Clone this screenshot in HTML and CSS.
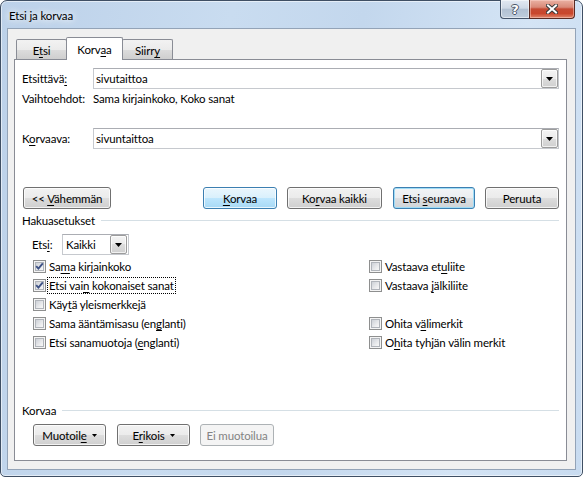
FILE: index.html
```html
<!DOCTYPE html>
<html lang="fi">
<head>
<meta charset="utf-8">
<title>Etsi ja korvaa</title>
<link rel="stylesheet" href="styles.css">
</head>
<body>
<div class="window">
  <div class="titlebar">
    <span class="title">Etsi ja korvaa</span>
    <div class="caption">
      <div class="cap-btn help"><span class="qmark">?</span></div>
      <div class="cap-btn close">
        <svg width="12" height="10" viewBox="0 0 12 10"><path d="M2 1.5L10 8.5M10 1.5L2 8.5" stroke="#3a3a3a" stroke-width="4" stroke-linecap="square"/><path d="M2 1.5L10 8.5M10 1.5L2 8.5" stroke="#fff" stroke-width="2" stroke-linecap="square"/></svg>
      </div>
    </div>
  </div>
  <div class="client">
    <div class="tabctl">
      <div class="tabstrip">
        <div class="tab"><span>E<u>t</u>si</span></div>
        <div class="tab active"><span>Korv<u>a</u>a</span></div>
        <div class="tab"><span>Siirr<u>y</u></span></div>
      </div>
      <div class="panel">
        <div class="row-combo first">
          <span class="lbl">Etsittävä<u>:</u></span>
          <div class="combo">
            <span class="combo-text">sivutaittoa</span>
            <span class="ddbtn"><svg width="7" height="4" viewBox="0 0 7 4"><path d="M0 0H7L3.5 4Z" fill="#000"/></svg></span>
          </div>
        </div>
        <div class="row-text">
          <span class="lbl">Vaihtoehdot:</span>
          <span>Sama kirjainkoko, Koko sanat</span>
        </div>
        <div class="row-combo second">
          <span class="lbl">K<u>o</u>rvaava:</span>
          <div class="combo">
            <span class="combo-text">sivuntaittoa</span>
            <span class="ddbtn"><svg width="7" height="4" viewBox="0 0 7 4"><path d="M0 0H7L3.5 4Z" fill="#000"/></svg></span>
          </div>
        </div>
        <div class="btnrow">
          <div class="btn b-less"><span>&lt;&lt; <u>V</u>ähemmän</span></div>
          <div class="btn b-replace default"><span><u>K</u>orvaa</span></div>
          <div class="btn b-all"><span>Ko<u>r</u>vaa kaikki</span></div>
          <div class="btn b-next focus"><span>Etsi <u>s</u>euraava</span></div>
          <div class="btn b-cancel"><span>Peruuta</span></div>
        </div>
        <div class="group-head hs">
          <span>Hakuasetukset</span><span class="rule"></span>
        </div>
        <div class="search-row">
          <span class="search-lbl">Ets<u>i</u>:</span>
          <div class="select">
            <span class="combo-text">Kaikki</span>
            <span class="ddbtn"><svg width="7" height="4" viewBox="0 0 7 4"><path d="M0 0H7L3.5 4Z" fill="#000"/></svg></span>
          </div>
        </div>
        <div class="checks">
          <div class="chk"><span class="cb"><span class="cb-in"></span><svg class="tick" width="13" height="13" viewBox="0 0 13 13"><path d="M3.2 6.2L5.4 8.6L9.8 3.4" fill="none" stroke="#3d5185" stroke-width="1.9"/></svg></span><span class="clbl">Sa<u>m</u>a kirjainkoko</span></div>
          <div class="chk"><span class="cb"><span class="cb-in"></span></span><span class="clbl">Vastaava et<u>u</u>liite</span></div>
          <div class="chk"><span class="cb"><span class="cb-in"></span><svg class="tick" width="13" height="13" viewBox="0 0 13 13"><path d="M3.2 6.2L5.4 8.6L9.8 3.4" fill="none" stroke="#3d5185" stroke-width="1.9"/></svg></span><span class="clbl focused">Etsi vai<u>n</u> kokonaiset sanat</span></div>
          <div class="chk"><span class="cb"><span class="cb-in"></span></span><span class="clbl">Vastaava <u>j</u>älkiliite</span></div>
          <div class="chk"><span class="cb"><span class="cb-in"></span></span><span class="clbl">Käy<u>t</u>ä yleismerkkejä</span></div>
          <div class="chk empty"></div>
          <div class="chk"><span class="cb"><span class="cb-in"></span></span><span class="clbl">Sama ääntämisasu (en<u>g</u>lanti)</span></div>
          <div class="chk"><span class="cb"><span class="cb-in"></span></span><span class="clbl">Ohita v<u>ä</u>limerkit</span></div>
          <div class="chk"><span class="cb"><span class="cb-in"></span></span><span class="clbl">Etsi sanamuotoja (<u>e</u>nglanti)</span></div>
          <div class="chk"><span class="cb"><span class="cb-in"></span></span><span class="clbl">O<u>h</u>ita tyhjän välin merkit</span></div>
        </div>
        <div class="group-head kv">
          <span>Korvaa</span><span class="rule"></span>
        </div>
        <div class="btnrow2">
          <div class="btn b-fmt"><span>Muotoil<u>e</u></span><svg class="marr" width="5" height="3" viewBox="0 0 5 3"><path d="M0 0H5L2.5 3Z" fill="#000"/></svg></div>
          <div class="btn b-spec"><span>E<u>r</u>ikois</span><svg class="marr" width="5" height="3" viewBox="0 0 5 3"><path d="M0 0H5L2.5 3Z" fill="#000"/></svg></div>
          <div class="btn b-nofmt disabled"><span>Ei muotoilua</span></div>
        </div>
      </div>
    </div>
  </div>
</div>
</body>
</html>
```
FILE: styles.css
```css
* { box-sizing: border-box; }
html, body { margin: 0; padding: 0; }
body {
  width: 583px;
  height: 477px;
  overflow: hidden;
  background: #fff;
  font-family: Lato, "Noto Sans", sans-serif;
  font-size: 11.5px;
  letter-spacing: -0.15px;
  color: #000;
}
u { text-decoration: underline; text-underline-offset: 2px; }

.window {
  width: 583px;
  height: 477px;
  display: flex;
  flex-direction: column;
  border: 1px solid #3f4f64;
  border-radius: 7px 7px 5px 5px;
  padding: 0 6px 6px 6px;
  background: linear-gradient(100deg, #bcd1e9 0%, #c9dcf0 35%, #c3d7ed 55%, #d4e4f5 80%, #c8dbf0 100%);
  box-shadow: inset 0 0 0 1px rgba(255,255,255,0.55);
}

.titlebar {
  height: 27px;
  display: flex;
  align-items: flex-start;
}
.title {
  margin-left: 2px;
  margin-top: 7px;
  line-height: 15px;
  text-shadow: 0 0 6px #fff, 0 0 10px rgba(255,255,255,0.9);
}
.caption {
  margin-left: auto;
  margin-right: 1px;
  margin-top: -1px;
  display: flex;
}
.cap-btn {
  height: 19px;
  display: flex;
  align-items: center;
  justify-content: center;
  border: 1px solid #44546a;
  border-top: none;
}
.help {
  width: 29px;
  border-right: none;
  border-radius: 0 0 0 4px;
  background: linear-gradient(#e2e9f2 0%, #cfd9e6 45%, #b2c1d3 52%, #bfcddd 100%);
  box-shadow: inset 0 0 0 1px rgba(255,255,255,0.5);
}
.qmark {
  font-family: "DejaVu Sans", sans-serif;
  font-weight: bold;
  font-size: 13px;
  line-height: 13px;
  color: #fff;
  text-shadow: -1px 0 #4a5566, 1px 0 #4a5566, 0 -1px #4a5566, 0 1px #4a5566;
}
.close {
  width: 46px;
  border-color: #5a2a22;
  border-radius: 0 0 4px 0;
  background: linear-gradient(#eab1a3 0%, #d98a78 40%, #c54a33 50%, #c9462c 75%, #e0866b 100%);
  box-shadow: inset 0 0 0 1px rgba(255,220,210,0.45);
}

.client {
  flex: 1;
  display: flex;
  border: 1px solid #93a3b7;
  background: #f0f0f0;
  padding: 8px 8px 8px 6px;
}
.tabctl {
  flex: 1;
  display: flex;
  flex-direction: column;
}
.tabstrip {
  height: 23px;
  margin-bottom: -1px;
  padding-left: 2px;
  display: flex;
  align-items: flex-start;
  position: relative;
  z-index: 1;
}
.tab {
  height: 20px;
  margin-top: 2px;
  width: 51px;
  border: 1px solid #898c95;
  border-bottom: none;
  border-radius: 2px 2px 0 0;
  background: linear-gradient(#f2f2f2 0%, #ebebeb 50%, #dddddd 50%, #cfcfcf 100%);
  display: flex;
  align-items: center;
  justify-content: center;
  padding-top: 2px;
}
.tab + .tab { margin-left: -1px; }
.tab.active {
  height: 23px;
  margin-top: 0;
  width: 57px;
  background: #fff;
  padding-top: 0;
  position: relative;
  z-index: 2;
}
.tab:last-child { width: 51px; }

.panel {
  flex: 1;
  background: #fff;
  border: 1px solid #898c95;
  padding: 8px 7px 0 7px;
  display: flex;
  flex-direction: column;
}

.lbl { width: 71px; flex: none; }
.row-combo {
  display: flex;
  align-items: center;
  height: 21px;
}
.row-combo.second { margin-top: 22px; }
.row-text {
  display: flex;
  align-items: center;
  height: 15px;
  margin-top: 2px;
}
.combo, .select {
  height: 21px;
  display: flex;
  align-items: center;
  background: #fff;
  border: 1px solid #c6c9ce;
  border-top-color: #abadb3;
  padding: 0 0 0 2px;
}
.combo { flex: 1; }
.combo-text { flex: 1; }
.ddbtn {
  width: 17px;
  height: 19px;
  flex: none;
  border: 1px solid #9c9c9c;
  border-radius: 2px;
  background: linear-gradient(#f4f4f4 0%, #ebebeb 50%, #dddddd 50%, #d0d0d0 100%);
  box-shadow: inset 0 0 0 1px rgba(255,255,255,0.7);
  display: flex;
  align-items: center;
  justify-content: center;
}
.ddbtn svg { display: block; }

.btn {
  height: 22px;
  flex: none;
  border: 1px solid #707070;
  border-radius: 3px;
  background: linear-gradient(#f2f2f2 0%, #ebebeb 50%, #dddddd 50%, #cfcfcf 100%);
  box-shadow: inset 0 0 0 1px rgba(255,255,255,0.75);
  display: flex;
  align-items: center;
  justify-content: center;
  white-space: nowrap;
}
.btn.default {
  border-color: #3c7fb1;
  background: linear-gradient(#eaf6fd 0%, #d9f0fc 50%, #bee6fd 50%, #a7d9f5 100%);
}
.btn.focus {
  border-color: #3c7fb1;
  box-shadow: inset 0 0 0 1px #9fdcf6;
  background: linear-gradient(#f2f4f6 0%, #eaedf0 50%, #dcdfe2 50%, #d0d4d8 100%);
}
.btn.disabled {
  border-color: #adb2b5;
  background: #f4f4f4;
  box-shadow: none;
  color: #838383;
}

.btnrow {
  margin-top: 38px;
  display: flex;
}
.b-less { width: 88px; margin-left: 1px; }
.b-replace { width: 74px; margin-left: auto; }
.b-all { width: 95px; margin-left: 10px; }
.b-next { width: 82px; margin-left: 11px; }
.b-cancel { width: 74px; margin-left: 10px; }

.group-head {
  display: flex;
  align-items: center;
  height: 15px;
}
.group-head .rule {
  flex: 1;
  height: 1px;
  background: #d5dfe5;
  margin-left: 6px;
}
.group-head.hs { margin-top: 4px; }
.group-head.kv { margin-top: 51px; }

.search-row {
  margin-top: 6px;
  display: flex;
  align-items: center;
  padding-left: 10px;
}
.search-lbl { width: 30px; }
.select { width: 67px; padding-left: 3px; padding-right: 1px; }

.checks {
  margin-top: 2px;
  padding-left: 11px;
  display: grid;
  grid-template-columns: 336px 1fr;
  grid-auto-rows: 19px;
}
.chk {
  display: flex;
  align-items: center;
}
.cb {
  width: 13px;
  height: 13px;
  flex: none;
  display: grid;
  border: 1px solid #8e8f8f;
  background: #f4f4f4;
  padding: 1px;
}
.cb-in, .cb .tick { grid-area: 1 / 1; }
.cb-in {
  border: 1px solid #b0b4ba;
  background: linear-gradient(135deg, #cdd1d7 0%, #e9eaec 60%, #f8f8f8 100%);
}
.cb .tick { margin: -2px; display: block; }
.clbl {
  margin-left: 1px;
  padding: 0 1px;
  border: 1px dotted transparent;
  line-height: 15px;
}
.clbl.focused { border-color: #000; }

.btnrow2 {
  margin-top: 6px;
  display: flex;
  padding-left: 11px;
}
.b-fmt { width: 73px; }
.b-spec { width: 73px; margin-left: 11px; }
.b-nofmt { width: 74px; margin-left: 10px; }
.marr { margin-left: 5px; display: block; }
```
